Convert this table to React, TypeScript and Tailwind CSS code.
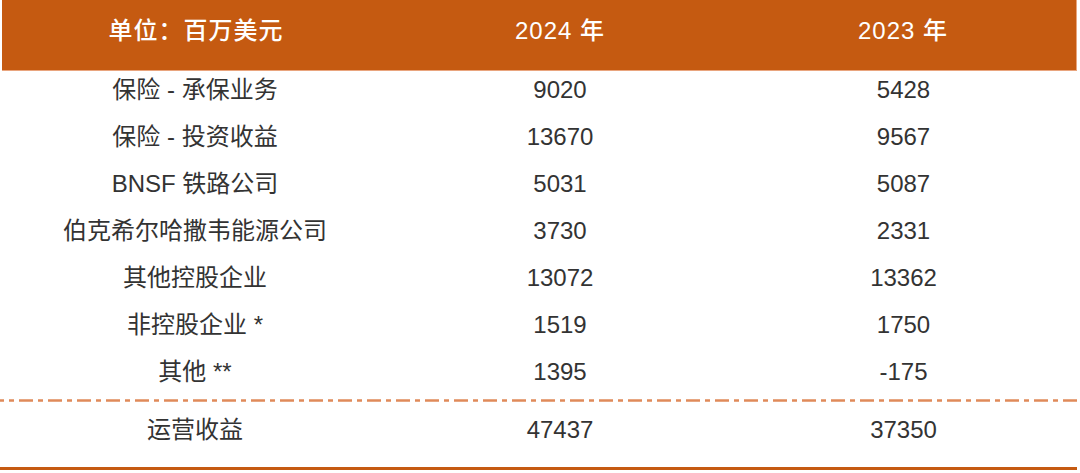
const rows: [string, string, string][] = [
  ["保险 - 承保业务", "9020", "5428"],
  ["保险 - 投资收益", "13670", "9567"],
  ["BNSF 铁路公司", "5031", "5087"],
  ["伯克希尔哈撒韦能源公司", "3730", "2331"],
  ["其他控股企业", "13072", "13362"],
  ["非控股企业 *", "1519", "1750"],
  ["其他 **", "1395", "-175"],
]

const font = { fontFamily: '"Liberation Sans", "Noto Sans CJK SC", sans-serif' }

export default function App() {
  return (
    <div className="w-[1080px] h-[473px] bg-white" style={font}>
      <div className="w-[1077px]">
        {/* header */}
        <div className="ml-[2px] h-[71px] bg-[#c55a11] border-b border-r border-[#e9a57e] flex items-center pb-[8px] text-white text-[24px] font-medium tracking-[1px]">
          <div className="w-[388px] text-center">单位：百万美元</div>
          <div className="w-[340px] text-center">2024 年</div>
          <div className="flex-1 text-center">2023 年</div>
        </div>

        {/* body */}
        {rows.map(([name, a, b]) => (
          <div key={name} className="h-[47px] flex items-center pb-[10px] text-[24px] text-[#333333]">
            <div className="w-[390px] text-center">{name}</div>
            <div className="w-[340px] text-center">{a}</div>
            <div className="flex-1 text-center">{b}</div>
          </div>
        ))}

        <svg width="1077" height="3" className="block -mt-[1px]">
          <line x1="-10" y1="1.5" x2="1077" y2="1.5" stroke="#e08a5a" strokeWidth="2.6" strokeDasharray="14 5 5 5" />
        </svg>

        <div className="h-[65px] flex items-center pb-[10px] text-[24px] text-[#333333]">
          <div className="w-[390px] text-center">运营收益</div>
          <div className="w-[340px] text-center">47437</div>
          <div className="flex-1 text-center">37350</div>
        </div>

        <div className="h-[3px] bg-[#c55a11]" />
      </div>
    </div>
  )
}
